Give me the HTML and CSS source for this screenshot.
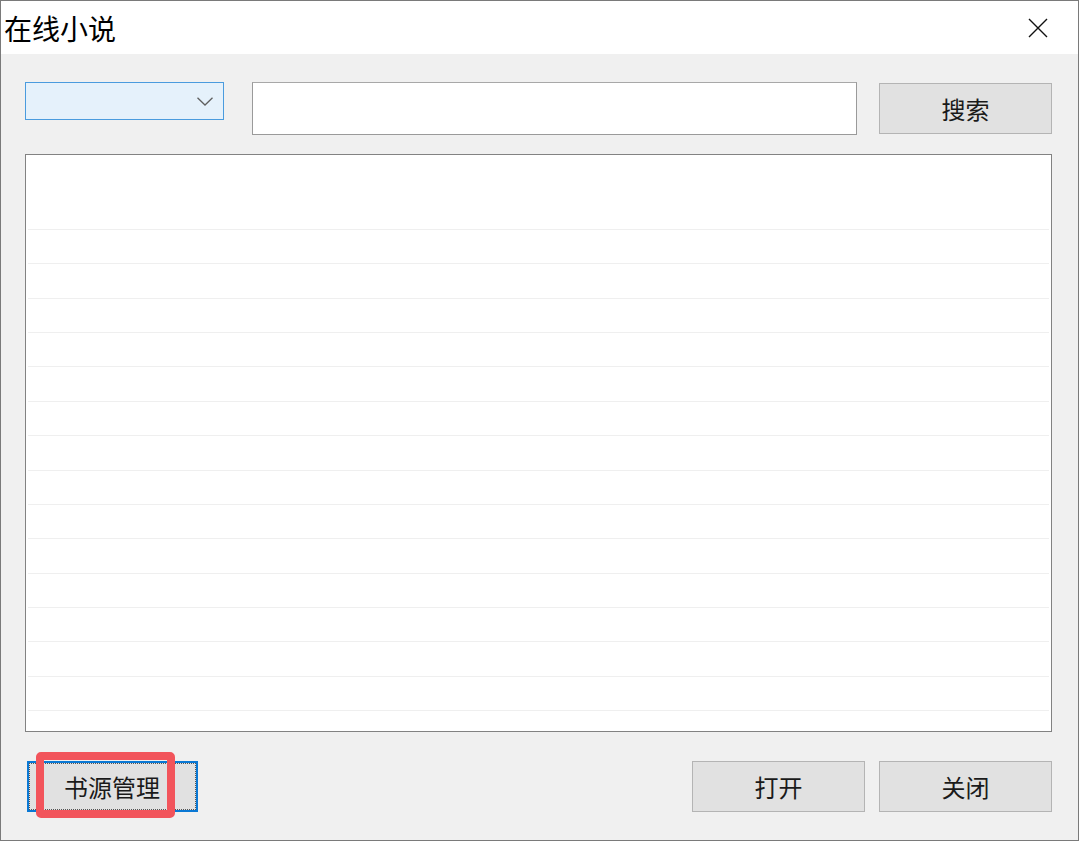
FILE: index.html
```html
<!DOCTYPE html>
<html lang="zh">
<head>
<meta charset="utf-8">
<title>在线小说</title>
<link rel="stylesheet" href="styles.css">
</head>
<body>
<div class="window">
  <div class="titlebar">
    <span class="title">在线小说</span>
    <span class="close">
      <svg width="20" height="20" viewBox="0 0 20 20"><path d="M1 1 L19 19 M19 1 L1 19" stroke="#111" stroke-width="1.4" fill="none"/></svg>
    </span>
  </div>
  <div class="content">
    <div class="toprow">
      <div class="combo">
        <svg class="chev" width="16" height="9" viewBox="0 0 16 9"><path d="M0.5 0.8 L8 8 L15.5 0.8" stroke="#5f5f5f" stroke-width="1.3" fill="none"/></svg>
      </div>
      <div class="textbox"></div>
      <div class="btn btn-search">搜索</div>
    </div>
    <div class="listbox">
      <div class="list-head"></div>
      <div class="row"></div><div class="row"></div><div class="row"></div><div class="row"></div><div class="row"></div>
      <div class="row"></div><div class="row"></div><div class="row"></div><div class="row"></div><div class="row"></div>
      <div class="row"></div><div class="row"></div><div class="row"></div><div class="row"></div><div class="row"></div>
    </div>
    <div class="bottomrow">
      <div class="btn btn-focus"><span class="focus-inner">书源管理</span><span class="highlight"></span></div>
      <div class="spacer"></div>
      <div class="btn">打开</div>
      <div class="btn">关闭</div>
    </div>
  </div>
</div>
</body>
</html>
```
FILE: styles.css
```css
html, body {
  margin: 0;
  padding: 0;
  background: #ffffff;
  font-family: "Noto Sans CJK SC", "Noto Sans", sans-serif;
}
.window {
  width: 1079px;
  height: 841px;
  box-sizing: border-box;
  border: 1px solid #7a7a7a;
  display: flex;
  flex-direction: column;
  background: #f0f0f0;
}
.titlebar {
  height: 53px;
  background: #ffffff;
  display: flex;
  align-items: center;
  justify-content: space-between;
  flex: none;
}
.title {
  font-size: 28px;
  line-height: 1;
  color: #000;
  margin-left: 3px;
  margin-top: 1px;
}
.close {
  width: 20px;
  height: 20px;
  margin-right: 30px;
  display: flex;
}
.content {
  flex: 1;
  padding: 28px 26px 0 24px;
  display: flex;
  flex-direction: column;
}
.toprow {
  display: flex;
  align-items: flex-start;
  height: 53px;
}
.combo {
  width: 199px;
  height: 38px;
  box-sizing: border-box;
  background: #e5f1fb;
  border: 1px solid #4a9bde;
  display: flex;
  align-items: center;
  justify-content: flex-end;
  padding-right: 10px;
}
.chev { display: block; margin-top: 1px; }
.textbox {
  width: 606px;
  height: 53px;
  box-sizing: border-box;
  margin-left: 28px;
  background: #fff;
  border: 1px solid #9a9a9a;
  border-top-color: #a8a8a8;
}
.btn {
  width: 173px;
  height: 51px;
  box-sizing: border-box;
  background: #e1e1e1;
  border: 1px solid #b4b4b4;
  display: flex;
  align-items: center;
  justify-content: center;
  font-size: 24px;
  color: #1a1a1a;
  line-height: 1;
}
.btn-search {
  margin-left: 22px;
  margin-top: 1px;
}
.listbox {
  margin-top: 19px;
  width: 1027px;
  height: 578px;
  box-sizing: border-box;
  background: #fff;
  border: 1px solid #828282;
  padding: 0 2px;
  flex: none;
}
.list-head { height: 74px; }
.row {
  height: 34.36px;
  box-sizing: border-box;
  border-top: 1px solid #efefef;
}
.bottomrow {
  margin-top: 29px;
  display: flex;
  align-items: flex-start;
  gap: 14px;
}
.spacer { flex: 1; }
.btn-focus {
  width: 171px;
  margin-left: 2px;
  border: 2px solid #0a78d4;
  position: relative;
  padding: 0;
}
.focus-inner {
  flex: 1;
  align-self: stretch;
  display: flex;
  align-items: center;
  justify-content: center;
  border: 1px dotted #555;
  padding-right: 1px;
}
.highlight {
  position: absolute;
  left: 7px;
  top: -11px;
  width: 139px;
  height: 66px;
  box-sizing: border-box;
  border: 8px solid #f2545b;
  border-radius: 5px;
}
```
